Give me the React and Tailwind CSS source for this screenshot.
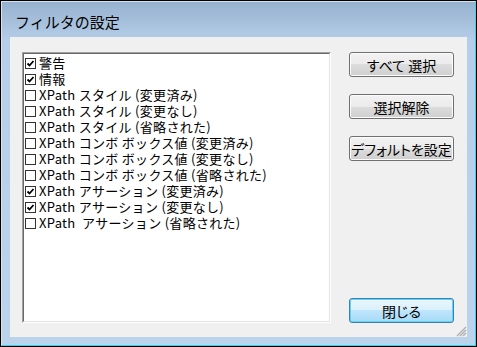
const items = [
  { label: "警告", checked: true },
  { label: "情報", checked: true },
  { label: "XPath スタイル (変更済み)", checked: false },
  { label: "XPath スタイル (変更なし)", checked: false },
  { label: "XPath スタイル (省略された)", checked: false },
  { label: "XPath コンボ ボックス値 (変更済み)", checked: false },
  { label: "XPath コンボ ボックス値 (変更なし)", checked: false },
  { label: "XPath コンボ ボックス値 (省略された)", checked: false },
  { label: "XPath アサーション (変更済み)", checked: true },
  { label: "XPath アサーション (変更なし)", checked: true },
  { label: "XPath  アサーション (省略された)", checked: false },
];

const font = "font-['Noto_Sans_CJK_JP','Noto_Sans',sans-serif]";

const CheckBox = ({ checked }) => (
  <div className="w-[11px] h-[11px] border border-[#333333] bg-white flex items-center justify-center shrink-0">
    {checked && (
      <svg width="9" height="9" viewBox="0 0 9 9">
        <path d="M1.5 4.5 L3.5 6.5 L7.5 2" fill="none" stroke="#000" strokeWidth="1.8" />
      </svg>
    )}
  </div>
);

const Button = ({ children, primary }) => (
  <button
    className={
      primary
        ? "h-[25px] w-full rounded-[3px] border border-[#3c7fb1] shadow-[inset_0_0_0_1px_#5fd4f8] bg-[linear-gradient(to_bottom,#eaf6fd_0%,#d9f0fc_50%,#bee6fd_50%,#a7d9f5_100%)] text-[14px] text-black leading-none flex items-center justify-center [font-feature-settings:'palt'] whitespace-nowrap"
        : "h-[25px] w-full rounded-[3px] border border-[#707070] shadow-[inset_0_0_0_1px_#fcfcfc] bg-[linear-gradient(to_bottom,#f2f2f2_0%,#ebebeb_50%,#dddddd_50%,#cfcfcf_100%)] text-[14px] text-black leading-none flex items-center justify-center [font-feature-settings:'palt'] whitespace-nowrap"
    }
  >
    {children}
  </button>
);

export default function App() {
  return (
    <div className={`w-[477px] h-[347px] border border-black ${font}`}>
      <div className="h-full flex flex-col border-l border-t border-l-[#d6e3f1] border-t-[#d6e3f1] border-r border-b border-r-[#3fcdf0] border-b-[#3fcdf0] bg-[linear-gradient(to_bottom,#97b2cf_0px,#b6cee9_40px,#bcd3ec_100%)] px-[8px] pb-[8px]">
        <div className="h-[35px] flex items-center pl-[5px] pt-[5px] text-[15px] text-black">
          フィルタの設定
        </div>
        <div className="flex-1 relative bg-[#f0f0f0] flex pt-[15px] pl-[12px] pr-[13px] pb-[14px]">
          <div className="w-[309px] h-[271px] border border-t-[#a0a0a0] border-l-[#a0a0a0] border-r-white border-b-white">
            <div className="h-full bg-white border border-t-[#696969] border-l-[#696969] border-r-[#e3e3e3] border-b-[#e3e3e3] pt-px pl-px">
              {items.map((item, i) => (
                <div key={i} className="h-[16px] flex items-center gap-[3px] text-[13px] text-black whitespace-pre leading-[16px] tracking-[0.3px]">
                  <CheckBox checked={item.checked} />
                  <span>{item.label}</span>
                </div>
              ))}
            </div>
          </div>
          <div className="ml-[18px] w-[105px] flex flex-col">
            <div className="flex flex-col gap-[17px]">
              <Button>すべて 選択</Button>
              <Button>選択解除</Button>
              <Button>デフォルトを設定</Button>
            </div>
            <div className="mt-auto">
              <Button primary>閉じる</Button>
            </div>
          </div>
          <svg className="absolute right-0 bottom-0" width="12" height="12" viewBox="0 0 12 12">
            <path d="M11 2 L2 11 M11 5 L5 11 M11 8 L8 11" stroke="#b0b0b0" strokeWidth="1.4" />
          </svg>
        </div>
      </div>
    </div>
  );
}
